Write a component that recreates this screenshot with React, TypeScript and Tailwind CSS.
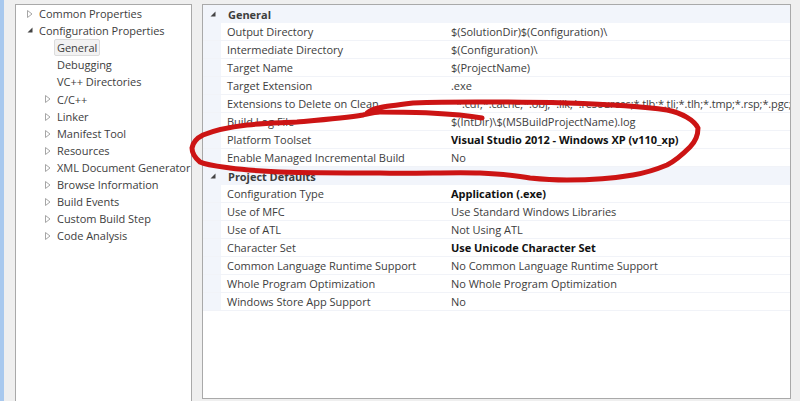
import React from "react";

const left: [string, number, "open" | "closed" | "none"][] = [
  ["Common Properties", 39, "closed"],
  ["Configuration Properties", 39, "open"],
  ["General", 57, "none"],
  ["Debugging", 57, "none"],
  ["VC++ Directories", 57, "none"],
  ["C/C++", 57, "closed"],
  ["Linker", 57, "closed"],
  ["Manifest Tool", 57, "closed"],
  ["Resources", 57, "closed"],
  ["XML Document Generator", 57, "closed"],
  ["Browse Information", 57, "closed"],
  ["Build Events", 57, "closed"],
  ["Custom Build Step", 57, "closed"],
  ["Code Analysis", 57, "closed"],
];

const general: [string, string, boolean?][] = [
  ["Output Directory", "$(SolutionDir)$(Configuration)\\"],
  ["Intermediate Directory", "$(Configuration)\\"],
  ["Target Name", "$(ProjectName)"],
  ["Target Extension", ".exe"],
  ["Extensions to Delete on Clean", "*.cdf;*.cache;*.obj;*.ilk;*.resources;*.tlb;*.tli;*.tlh;*.tmp;*.rsp;*.pgc;*.pgd"],
  ["Build Log File", "$(IntDir)\\$(MSBuildProjectName).log"],
  ["Platform Toolset", "Visual Studio 2012 - Windows XP (v110_xp)", true],
  ["Enable Managed Incremental Build", "No"],
];

const defaults: [string, string, boolean?][] = [
  ["Configuration Type", "Application (.exe)", true],
  ["Use of MFC", "Use Standard Windows Libraries"],
  ["Use of ATL", "Not Using ATL"],
  ["Character Set", "Use Unicode Character Set", true],
  ["Common Language Runtime Support", "No Common Language Runtime Support"],
  ["Whole Program Optimization", "No Whole Program Optimization"],
  ["Windows Store App Support", "No"],
];

function Arrow({ open }: { open: boolean }) {
  return open ? (
    <svg width="8" height="8" viewBox="0 0 8 8" className="shrink-0">
      <path d="M6.5 1.5V6.5H1.5Z" fill="#444" />
    </svg>
  ) : (
    <svg width="8" height="10" viewBox="0 0 8 10" className="shrink-0">
      <path d="M1.5 1.5L6 5L1.5 8.5Z" fill="#fff" stroke="#a6a6a6" />
    </svg>
  );
}

function Row({ name, value, bold }: { name: string; value: string; bold?: boolean }) {
  const long = value.length > 60;
  return (
    <div className="flex h-[18px] items-center border-b border-[#f1f3f8] leading-[15px]">
      <div className="h-full w-[18px] shrink-0 bg-[#f2f5fb]" />
      <div className="w-[224px] shrink-0 whitespace-nowrap pl-[6px]">{name}</div>
      <div
        className={
          "whitespace-nowrap pl-[6px] " +
          (bold ? "font-bold text-[#111] " : "") +
          (long ? "ml-[5px] tracking-[-0.13px]" : "")
        }
      >
        {value}
      </div>
    </div>
  );
}

function Header({ title }: { title: string }) {
  return (
    <div className="flex h-[18px] items-center bg-[#f2f5fb] pl-[6px] font-bold leading-[15px]">
      <Arrow open />
      <span className="pl-[11px]">{title}</span>
    </div>
  );
}

export default function App() {
  return (
    <div className="relative flex h-[401px] w-[800px] overflow-hidden bg-[#efefef] font-['Open_Sans','Noto_Sans',sans-serif] text-[11px] tracking-[-0.03px] text-[#3d3d3d]">
      <div className="w-[4px] shrink-0 bg-[#a9c9ee]" />
      <div className="flex shrink-0 pl-[11px] pt-[4px]">
        <div className="w-[177px] border border-b-0 border-[#a9a9a9] bg-white">
          {left.map(([t, x, kind]) => (
            <div key={t} className="relative flex h-[17.1px] items-center leading-[15px]" style={{ paddingLeft: x - 16 }}>
              {kind !== "none" && (
                <span className="absolute top-[4px]" style={{ left: x - 29 }}>
                  <Arrow open={kind === "open"} />
                </span>
              )}
              {t === "General" ? (
                <span className="-ml-[3px] rounded-[2px] border border-[#dcdcdc] bg-[#f2f2f2] px-[2px]">{t}</span>
              ) : (
                <span className="whitespace-nowrap">{t}</span>
              )}
            </div>
          ))}
        </div>
      </div>
      <div className="flex min-w-0 flex-1 pb-[2px] pl-[10px] pr-[9px] pt-[4px]">
        <div className="h-full w-full overflow-hidden border border-[#a9a9a9] bg-white">
          <Header title="General" />
          {general.map(([n, v, b]) => <Row key={n} name={n} value={v} bold={b} />)}
          <Header title="Project Defaults" />
          {defaults.map(([n, v, b]) => <Row key={n} name={n} value={v} bold={b} />)}
        </div>
      </div>
      <svg className="absolute left-0 top-0" width="800" height="401" viewBox="0 0 800 401">
        <path
          d="M367 113C372 108 380 107 413 103C460 101 520 102 567 103C600 104 640 106 667 110C682 113 694 120 698 128C698 136 696 141 690 147C682 155 675 161 667 165C655 170 645 173 633 175C610 179 590 180 567 180C550 180 540 179 530 178C515 175 500 174 480 173C450 172 415 174 380 173C345 173 310 173 280 172C260 171 245 170 230 168C215 166 206 165 200 162C194 157 192 153 192 148C193 142 197 138 203 135C215 130 230 127 247 125C265 123 280 123 297 122C320 120 345 118 363 115C372 113 376 112 380 112C400 112 415 112 430 113C450 114 465 115 482 118"
          fill="none"
          stroke="#cc1414"
          strokeWidth="5"
          strokeLinecap="round"
          strokeLinejoin="round"
        />
      </svg>
    </div>
  );
}
